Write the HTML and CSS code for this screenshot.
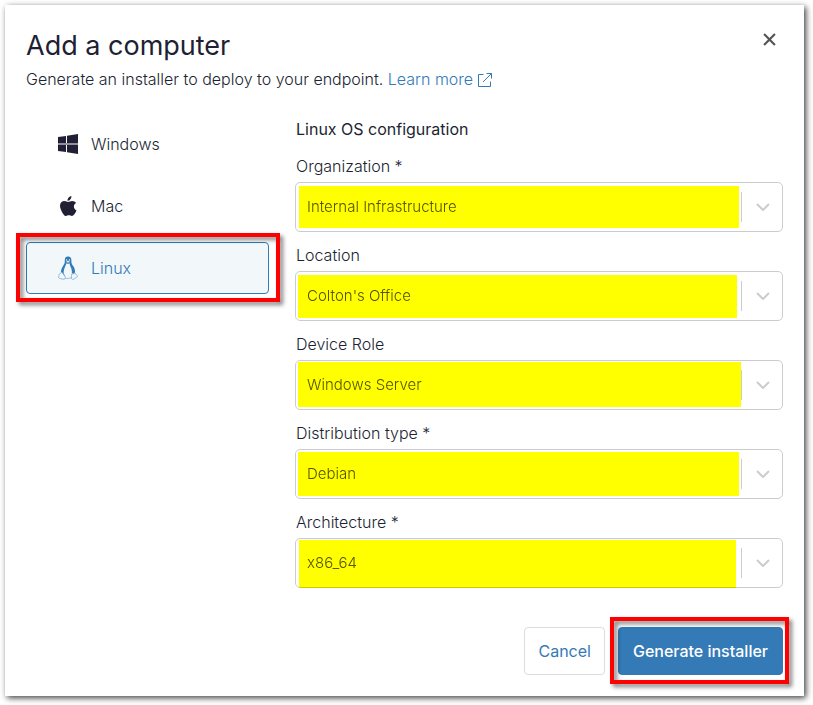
FILE: index.html
```html
<!DOCTYPE html>
<html lang="en">
<head>
<meta charset="utf-8">
<meta name="viewport" content="width=device-width, initial-scale=1">
<title>Add a computer</title>
<link rel="stylesheet" href="styles.css">
</head>
<body>
<main class="dialog" role="dialog" aria-labelledby="dialog-title">
  <header class="dialog-header">
    <div>
      <h1 class="title" id="dialog-title">Add a computer</h1>
      <p class="subtitle">Generate an installer to deploy to your endpoint.
        <a class="link" href="#learn">Learn more<svg class="external" viewBox="0 0 16 16" aria-hidden="true"><path d="M6.5 2.5H1.5V14.5H13.500V9.500M9.500 1.500H14.500V6.500M14.500 1.500L6 10"/></svg></a>
      </p>
    </div>
    <button class="close" type="button" aria-label="Close">
      <svg viewBox="0 0 12 12" aria-hidden="true"><path d="M1 1L11 11M11 1L1 11"/></svg>
    </button>
  </header>

  <div class="content">
    <nav class="platforms" aria-label="Platform">
      <button class="platform" type="button">
        <svg class="platform-icon" viewBox="0 0 20 20" aria-hidden="true"><path d="M0 3L8 1.900V9H0ZM9 1.750L20 0V9H9ZM0 11H8V18.100L0 17ZM9 11H20V20L9 18.300Z"/><path class="pane-gap" d="M0 9H20V11H0Z"/></svg>
        <span>Windows</span>
      </button>
      <button class="platform" type="button">
        <svg class="platform-icon" viewBox="0 0 20 20" aria-hidden="true"><path d="M13.400 0C13.500 1.400 13 2.600 12.200 3.500C11.400 4.400 10.500 4.900 9.500 4.800C9.400 3.600 9.900 2.500 10.700 1.600C11.500 .7 12.500 .1 13.400 0ZM18 6.900C16.600 7.800 15.900 9 15.900 10.500C15.900 12.300 16.900 13.700 18.500 14.300C18.100 15.600 17.400 16.900 16.500 18.100C15.700 19.200 15 20 13.900 20C12.700 20 12.300 19.300 10.900 19.300C9.500 19.300 9 20 7.900 20C6.800 20 6.100 19.100 5.200 17.900C3.500 15.600 2 12.100 2 9.800C2 6.800 4 5.100 6.500 5.100C8 5.100 9.200 6 10.200 6C11.200 6 12.500 5 14.200 5C15.700 5 17.200 5.700 18 6.900Z"/></svg>
        <span>Mac</span>
      </button>
      <div class="marked marked-platform">
        <button class="platform selected" type="button" aria-pressed="true">
          <svg class="platform-icon tux" viewBox="0 0 20 24" aria-hidden="true">
            <path d="M10 .5C7.600 .5 6.700 1.900 6.800 4.200C6.900 7.200 6.500 7.700 5 10C3.800 11.900 3.200 13.600 2.900 16L5 18.500L6 20.500H14L15.500 18L17 16.500C17.300 13.800 16.200 11.300 14.600 9.300C13.400 7.600 13.400 6.700 13.400 4.300C13.400 1.800 12.400 .5 10 .5Z"/>
            <path class="belly" d="M8.300 7.300L10 8L11.500 7.300C11.700 9 12.300 10.300 13 11.700C13.800 13.300 14 15.200 13.900 17.500L13.600 21H7.400L5.600 17C5.600 14.500 6.200 12.600 7 10.900C7.700 9.400 8.100 8.700 8.300 7.300Z"/>
            <path class="beak" d="M8 5.500L9.900 4.700L12 5.500L10 7Z"/>
            <path class="eyes" d="M8.500 3.300V4.500M11.500 3.300V4.500"/>
            <path class="feet" d="M3.400 16.200C5.100 17 5.800 19.100 7.100 20.700C7.900 22.200 6.800 23.500 5.100 23.200L1.200 22.300C.4 22 .5 21.300 .9 20.300C1 18.800 .6 18.300 2.100 18C2.700 17.700 2.700 16.500 3.400 16.200ZM14.400 17.300C15.300 18.400 16.500 17.500 17 16.900C17.900 18.600 19 19.300 19.500 20.300C19.600 21.200 17.200 21.900 16.100 23C15 23.800 13.500 23.500 13.400 22C13.500 20 13.500 18.500 14.400 17.300Z"/>
            <path class="outline" d="M7 22C9 22.700 11.500 22.600 13.400 21.500"/>
          </svg>
          <span>Linux</span>
        </button>
      </div>
    </nav>

    <form class="config" id="config">
      <h2 class="section-title">Linux OS configuration</h2>
      <div class="field">
        <label for="organization">Organization *</label>
        <div class="select-box">
          <select id="organization"><option>Internal Infrastructure</option></select>
          <span class="arrow"><svg viewBox="0 0 14 8" aria-hidden="true"><path d="M1 1L7 7L13 1"/></svg></span>
          <span class="highlight highlight-organization"></span>
        </div>
      </div>
      <div class="field">
        <label for="location">Location</label>
        <div class="select-box">
          <select id="location"><option>Colton's Office</option></select>
          <span class="arrow"><svg viewBox="0 0 14 8" aria-hidden="true"><path d="M1 1L7 7L13 1"/></svg></span>
          <span class="highlight highlight-location"></span>
        </div>
      </div>
      <div class="field">
        <label for="role">Device Role</label>
        <div class="select-box">
          <select id="role"><option>Windows Server</option></select>
          <span class="arrow"><svg viewBox="0 0 14 8" aria-hidden="true"><path d="M1 1L7 7L13 1"/></svg></span>
          <span class="highlight highlight-role"></span>
        </div>
      </div>
      <div class="field">
        <label for="distribution">Distribution type *</label>
        <div class="select-box">
          <select id="distribution"><option>Debian</option></select>
          <span class="arrow"><svg viewBox="0 0 14 8" aria-hidden="true"><path d="M1 1L7 7L13 1"/></svg></span>
          <span class="highlight highlight-distribution"></span>
        </div>
      </div>
      <div class="field">
        <label for="architecture">Architecture *</label>
        <div class="select-box">
          <select id="architecture"><option>x86_64</option></select>
          <span class="arrow"><svg viewBox="0 0 14 8" aria-hidden="true"><path d="M1 1L7 7L13 1"/></svg></span>
          <span class="highlight highlight-architecture"></span>
        </div>
      </div>
    </form>
  </div>

  <footer class="actions">
    <button class="button" type="button">Cancel</button>
    <div class="marked marked-submit">
      <button class="button primary" type="submit" form="config">Generate installer</button>
    </div>
  </footer>
</main>
</body>
</html>
```
FILE: styles.css
```css
* {
  box-sizing: border-box;
}

body {
  margin: 0;
  padding: 5px 9px 9px 5px;
  background: #fff;
  color: #211f33;
  font-family: Inter, "Liberation Sans", sans-serif;
  font-size: 16px;
  font-weight: 300;
  line-height: 24px;
}

button,
select {
  font: inherit;
}

.dialog {
  padding: 23px 21px 21px;
  background: #fff;
  box-shadow: 2px 2px 6px rgba(0, 0, 0, 0.75);
}

.dialog-header {
  display: flex;
  justify-content: space-between;
  align-items: flex-start;
}

.title {
  margin: 0;
  font-size: 27px;
  font-weight: 400;
  line-height: 36px;
}

.subtitle {
  margin: 3px 0 0;
}

.link {
  color: #337ab7;
  text-decoration: none;
}

.external {
  width: 16px;
  height: 16px;
  margin-left: 4px;
  vertical-align: -3px;
  fill: none;
  stroke: currentColor;
}

.close {
  display: flex;
  padding: 5px 7px;
  border: 0;
  background: none;
}

.close svg {
  width: 13px;
  height: 13px;
  fill: none;
  stroke: #555;
  stroke-width: 2;
}

.content {
  display: grid;
  grid-template-columns: 243px 1fr;
  gap: 26px;
  margin-top: 26px;
}

.platforms {
  display: flex;
  flex-direction: column;
  gap: 10px;
  padding-top: 1px;
}

.platform {
  display: flex;
  align-items: center;
  gap: 13px;
  width: 100%;
  height: 52px;
  padding: 0 31px;
  border: 1px solid transparent;
  border-radius: 4px;
  background: none;
  color: #211f33;
}

.platform-icon {
  width: 20px;
  height: 20px;
  fill: currentColor;
}

.pane-gap {
  fill: #9290a0;
}

.selected {
  border-color: #337ab7;
  background: #f2f7fa;
  color: #337ab7;
}

.tux {
  height: 24px;
}

.belly,
.beak,
.feet {
  fill: #f2f7fa;
}

.beak,
.feet,
.outline {
  stroke: #7fb0d8;
  stroke-width: 0.8;
}

.outline {
  fill: none;
}

.eyes {
  stroke: #f2f7fa;
}

.marked {
  position: relative;
}

.marked::after {
  content: "";
  position: absolute;
  border: 4px solid #f00;
  filter: drop-shadow(3px 3px 2px rgba(0, 0, 0, 0.5));
  pointer-events: none;
}

.marked-platform::after {
  inset: -9px -11px -8px -10px;
}

.marked-submit::after {
  inset: -10px -6px -9px -8px;
}

.section-title {
  margin: 0 0 13px;
  padding-left: 1px;
  font-size: 16px;
  font-weight: 400;
  line-height: 24px;
}

.field {
  margin-bottom: 11px;
}

.field label {
  display: block;
  margin-bottom: 4px;
  padding-left: 1px;
}

.select-box {
  position: relative;
  isolation: isolate;
}

.select-box select {
  display: block;
  width: 100%;
  height: 50px;
  padding: 0 56px 0 11px;
  border: 1px solid #ccc;
  border-radius: 5px;
  background: #fff;
  color: #555;
  font-size: 15px;
  font-weight: 300;
  appearance: none;
}

.arrow {
  position: absolute;
  inset: 10px 0 10px auto;
  display: flex;
  align-items: center;
  justify-content: center;
  width: 42px;
  border-left: 1px solid #ccc;
  pointer-events: none;
}

.arrow svg {
  width: 14px;
  height: 8px;
  fill: none;
  stroke: #ccc;
  stroke-width: 2;
}

.highlight {
  position: absolute;
  background: #ff0;
  mix-blend-mode: multiply;
  pointer-events: none;
}

.highlight-organization {
  inset: 4px 44px 4px 4px;
}

.highlight-location {
  inset: 4px 46px 3px 3px;
}

.highlight-role {
  inset: 2px 42px 3px 3px;
}

.highlight-distribution {
  inset: 3px 44px 3px 3px;
}

.highlight-architecture {
  inset: 2px 47px 0 4px;
}

.actions {
  display: flex;
  justify-content: flex-end;
  gap: 13px;
  margin-top: 28px;
}

.button {
  height: 48px;
  padding: 0 13px;
  border: 1px solid #ddd;
  border-radius: 4px;
  background: #fff;
  color: #337ab7;
  font-weight: 400;
}

.primary {
  padding: 0 14px;
  border-color: #337ab7;
  background: #337ab7;
  color: #fff;
  font-weight: 500;
}
```
